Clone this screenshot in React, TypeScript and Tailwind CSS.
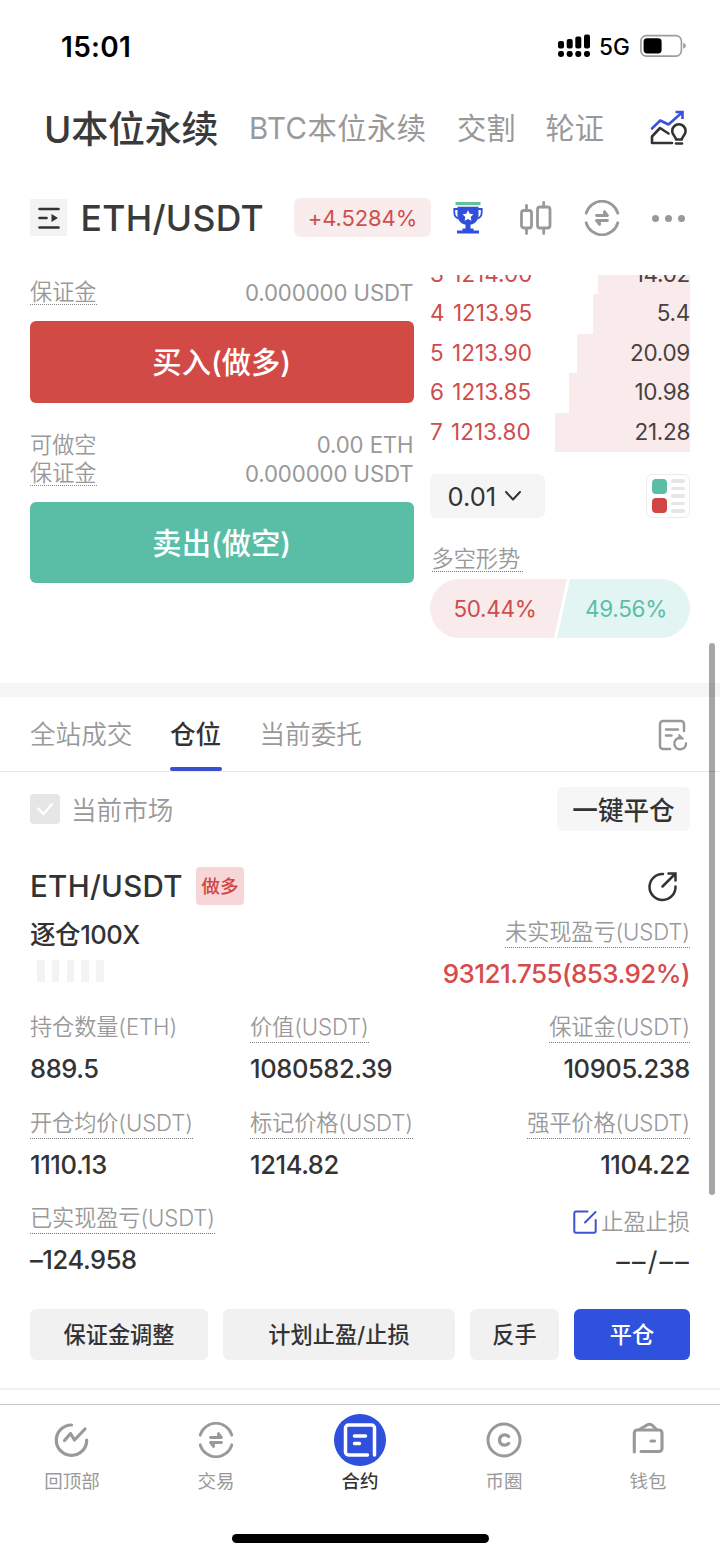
import React from 'react';

const StatusBar = () => (
  <div className="h-[92px] shrink-0 flex items-center justify-between pl-[61px] pr-[34px] text-black">
    <span className="pt-[1px] text-[28px] leading-none font-semibold tracking-[0.3px]">15:01</span>
    <div className="flex items-center">
      <svg width="33" height="24" viewBox="0 0 33 24" fill="currentColor">
        <rect x="0" y="7" width="6" height="7.5" rx="2" />
        <rect x="8.7" y="5" width="6" height="9.5" rx="2" />
        <rect x="17.3" y="2.5" width="6" height="12" rx="2" />
        <rect x="26" y="0.5" width="6" height="14" rx="2" />
        <rect x="0" y="17" width="6" height="6" rx="2.4" />
        <rect x="8.7" y="17" width="6" height="6" rx="2.4" />
        <rect x="17.3" y="17" width="6" height="6" rx="2.4" />
        <rect x="26" y="17" width="6" height="6" rx="2.4" />
      </svg>
      <span className="ml-[8px] w-[41px] pt-[2px] text-[22.5px] leading-none font-medium whitespace-nowrap">5G</span>
      <svg width="46" height="24" viewBox="0 0 46 24" fill="none">
        <rect x="0.9" y="1.6" width="40.5" height="20.5" rx="5.5" stroke="#9c9c9c" strokeWidth="1.6" />
        <rect x="3.6" y="4.3" width="18" height="15.2" rx="3.4" fill="#000" />
        <path d="M43.2 8.8c2 .8 2.6 1.8 2.6 3s-.6 2.2-2.6 3z" fill="#9c9c9c" />
      </svg>
    </div>
  </div>
);

const MarketTabs = () => (
  <div className="h-[72px] shrink-0 flex items-center pl-[44px] pr-[32px] text-[29.3px] leading-none text-[#999] whitespace-nowrap">
    <span className="w-[205px] pt-[2px] text-[37px] leading-none font-medium text-[#3a3a3a] tracking-[-0.2px]">U本位永续</span>
    <span className="w-[208px] pt-[2px] tracking-[0.5px]">BTC本位永续</span>
    <span className="w-[88.5px] pt-[2px]">交割</span>
    <span className="pt-[2px]">轮证</span>
    <svg className="ml-auto" width="38" height="36" viewBox="0 0 38 36" fill="none" strokeLinecap="round" strokeLinejoin="round">
      <path d="M2 18.5L10.2 10.5L18.5 14.5L32 2.5" stroke="#3b53d8" strokeWidth="2.6" />
      <path d="M25.5 2h7v7" stroke="#3b53d8" strokeWidth="2.6" strokeLinecap="butt" strokeLinejoin="miter" />
      <path d="M22 33H2V26.5L10 18L18.5 23.5" stroke="#333" strokeWidth="2.6" />
      <path d="M26 29.5c0-2.8-3.8-4-3.8-8.5a6.7 6.7 0 0 1 13.4 0c0 4.5-3.8 5.7-3.8 8.5z" stroke="#333" strokeWidth="2.6" />
      <path d="M26 33.5h6" stroke="#333" strokeWidth="2.6" />
    </svg>
  </div>
);

const SwapIcon = ({ size }: { size: number }) => (
  <svg width={size} height={size} viewBox="0 0 36 36" fill="none" stroke="currentColor" strokeWidth="2.8" strokeLinecap="round" strokeLinejoin="round">
    <path d="M2.2 13.2A16.4 16.4 0 0 1 33.8 13.2" />
    <path d="M2.2 22.8A16.4 16.4 0 0 0 33.8 22.8" />
    <path d="M12.5 15.5H23.5L20.5 11.5V15" />
    <path d="M23.5 20.5H12.5L15.5 24.5V21" />
  </svg>
);

const PairHeader = () => (
  <div className="h-[111px] shrink-0 flex items-start pt-[34px] pl-[30px]">
    <div className="mt-px w-[37px] h-[37px] bg-[#f3f3f3] flex items-center justify-center">
      <svg width="24" height="24" viewBox="0 0 24 24" fill="none" stroke="#333" strokeWidth="2.6" strokeLinecap="round">
        <path d="M2.5 3h19M2.5 12h7M2.5 21.5h19" />
        <path d="M14.5 8v8l6.5-4z" fill="#333" stroke="none" />
      </svg>
    </div>
    <span className="ml-[13.5px] w-[213.5px] text-[35.5px] leading-[41px] font-medium text-[#3a3a3a] tracking-[0.3px] whitespace-nowrap">ETH/USDT</span>
    <span className="w-[137px] h-[39px] rounded-md bg-[#f9ecec] text-center text-[22px] leading-[40px] tracking-[-0.1px] text-[#cf4f4f]">+4.5284%</span>
    <svg className="ml-[22px] mt-[4px]" width="30" height="32" viewBox="0 0 30 32">
      <rect x="2.5" y="0" width="25" height="3.2" fill="#62c39b" />
      <path d="M4.5 4.8h21V13c0 6-4.5 10-10.5 10S4.5 19 4.5 13z" fill="#2f50dc" />
      <path d="M5 7H1.3v3.5c0 3.5 2 5.5 4.7 6M25 7h3.7v3.5c0 3.5-2 5.5-4.7 6" fill="none" stroke="#2f50dc" strokeWidth="1.8" />
      <path d="M12.5 22h5v4.5h3V28.5H26V31.5H4V28.5H9.5V26.5H12.5z" fill="#2f50dc" />
      <path d="M15 8.2l1.7 3.5 3.8.5-2.8 2.7.7 3.8-3.4-1.8-3.4 1.8.7-3.8-2.8-2.7 3.8-.5z" fill="#fff" />
    </svg>
    <svg className="ml-[37px] mt-[3px]" width="32" height="34" viewBox="0 0 32 34" fill="none" stroke="#999" strokeWidth="2.8" strokeLinecap="round">
      <rect x="1.5" y="9.5" width="10" height="17.5" rx="2.5" />
      <path d="M6.5 4.5v5M6.5 27.5v5" />
      <rect x="17.5" y="6" width="12.5" height="21" rx="2.5" />
      <path d="M23.7 1.5v4.5M23.7 27.5v5" />
    </svg>
    <div className="ml-[32px] mt-[2px] text-[#999]">
      <SwapIcon size={36} />
    </div>
    <div className="ml-[32px] mt-[17px] flex gap-[6.5px]">
      <i className="w-[6.5px] h-[6.5px] rounded-full bg-[#999]" />
      <i className="w-[6.5px] h-[6.5px] rounded-full bg-[#999]" />
      <i className="w-[6.5px] h-[6.5px] rounded-full bg-[#999]" />
    </div>
  </div>
);

const TradeForm = () => (
  <div className="w-[383.5px] text-[22.2px] leading-[26px] text-[#999]">
    <div className="flex items-start justify-between pt-[4px]">
      <span className="h-[26px] leading-[26px] border-b border-dotted border-[#888] font-[350]">保证金</span>
      <span className="mt-[1px] tracking-[-0.1px]">0.000000 USDT</span>
    </div>
    <button className="mt-[15px] pt-[2px] w-full h-[82px] rounded-md bg-[#d24a45] text-white text-[29.3px] font-medium flex items-center justify-center">
      买入(做多)
    </button>
    <div className="flex items-center justify-between mt-[28px]">
      <span className="pt-[1px] font-[350]">可做空</span>
      <span className="tracking-[-0.1px]">0.00 ETH</span>
    </div>
    <div className="flex items-start justify-between mt-[1px]">
      <span className="h-[27px] leading-[27px] border-b border-dotted border-[#888] font-[350]">保证金</span>
      <span className="mt-[2px] tracking-[-0.1px]">0.000000 USDT</span>
    </div>
    <button className="mt-[15px] pt-[2px] w-full h-[81px] rounded-md bg-[#5abea7] text-white text-[29.3px] font-medium flex items-center justify-center">
      卖出(做空)
    </button>
  </div>
);

const asks = [
  { level: 3, price: '1214.00', amount: '14.02', depth: 92.5 },
  { level: 4, price: '1213.95', amount: '5.4', depth: 97 },
  { level: 5, price: '1213.90', amount: '20.09', depth: 113 },
  { level: 6, price: '1213.85', amount: '10.98', depth: 121 },
  { level: 7, price: '1213.80', amount: '21.28', depth: 135 },
];

const OrderBook = () => (
  <div className="w-[260px]">
    <div className="h-[177px] overflow-hidden flex flex-col justify-end">
      {asks.map((a) => (
        <div key={a.level} className="h-[39.4px] shrink-0 flex items-center justify-between text-[22.5px] leading-none">
          <span className="pb-[1px] text-[#cf4c4c] whitespace-pre [word-spacing:2px]">{a.level} {a.price}</span>
          <span
            className="h-full pb-[1px] bg-[#f9ebeb] text-[#4a4040] tracking-[-0.3px] flex items-center justify-end"
            style={{ width: a.depth }}
          >
            {a.amount}
          </span>
        </div>
      ))}
    </div>
    <div className="mt-[22px] flex items-center justify-between">
      <button className="w-[114.5px] h-[44px] rounded-md bg-[#f5f5f5] flex items-center pl-[17.5px] text-[25.5px] leading-none text-[#333]">
        <span className="w-[56.5px] pt-[1px] text-left">0.01</span>
        <svg width="18" height="12" viewBox="0 0 18 12" fill="none" stroke="#333" strokeWidth="2" strokeLinecap="round" strokeLinejoin="round">
          <path d="M2 2l7 7.5L16 2" />
        </svg>
      </button>
      <div className="w-[44px] h-[44px] rounded-md border border-[#ececec] flex items-center justify-center gap-[4px]">
        <div className="flex flex-col gap-[4px]">
          <i className="w-[15px] h-[15px] rounded-[4px] bg-[#5abea7]" />
          <i className="w-[15px] h-[15px] rounded-[4px] bg-[#d24545]" />
        </div>
        <div className="flex flex-col gap-[4px]">
          <i className="w-[14px] h-[3.5px] rounded-full bg-[#e6e6e6]" />
          <i className="w-[14px] h-[3.5px] rounded-full bg-[#e6e6e6]" />
          <i className="w-[14px] h-[3.5px] rounded-full bg-[#e6e6e6]" />
          <i className="w-[14px] h-[3.5px] rounded-full bg-[#e6e6e6]" />
          <i className="w-[14px] h-[3.5px] rounded-full bg-[#e6e6e6]" />
        </div>
      </div>
    </div>
    <div className="mt-[27px] ml-[1.5px] w-[91px] h-[27px] border-b border-dotted border-[#777] text-[22.2px] leading-[28px] font-[350] text-[#999]">多空形势</div>
    <div className="mt-[7px] h-[59px] rounded-full overflow-hidden flex text-[22.5px] leading-[60px] tracking-[-0.3px] text-center">
      <span className="w-[137px] pr-[7px] bg-[#f9ebeb] text-[#cf4c4c] [clip-path:polygon(0_0,100%_0,124px_100%,0_100%)]">50.44%</span>
      <span className="w-[133px] -ml-[10px] pl-[5px] bg-[#e2f5f3] text-[#5abea7] [clip-path:polygon(13px_0,100%_0,100%_100%,0_100%)]">49.56%</span>
    </div>
  </div>
);

const PositionTabs = () => (
  <div className="h-[75px] shrink-0 border-b border-[#e8e8e8] flex items-start pl-[30px] text-[25.6px] leading-[76px] font-[350] text-[#999] whitespace-nowrap">
    <span className="w-[140px]">全站成交</span>
    <span className="relative w-[52px] mr-[37.5px] h-[74px] font-medium text-[#333]">
      仓位
      <i className="absolute left-0 bottom-0 w-[52px] h-[4px] rounded-full bg-[#3b50cc]" />
    </span>
    <span>当前委托</span>
    <svg className="ml-auto mr-[32px] mt-[21.5px]" width="30" height="32" viewBox="0 0 30 32" fill="none" stroke="#999" strokeWidth="2.5" strokeLinecap="round" strokeLinejoin="round">
      <path d="M12 30H5a3 3 0 0 1-3-3V5a3 3 0 0 1 3-3H23a3 3 0 0 1 3 3V12" />
      <path d="M8 10.5h12M8 16.5h5.5" />
      <path d="M20.5 19A5.8 5.8 0 1 0 28 24.5" />
      <path d="M21 15.5v4.5h4.5z" fill="#999" strokeWidth="1" />
    </svg>
  </div>
);

const Field = ({ label, value, plain, end }: { label: string; value: string; plain?: boolean; end?: boolean }) => (
  <div className={`flex flex-col h-[95.5px] ${end ? 'items-end' : 'items-start'}`}>
    <span className={`h-[29px] text-[22.2px] leading-[26px] tracking-[-0.1px] font-[350] text-[#999] whitespace-nowrap ${plain ? '' : 'border-b border-dotted border-[#777]'}`}>
      {label}
    </span>
    <span className="mt-[12px] text-[25.5px] leading-[28px] font-medium tracking-[-0.4px] text-[#333]">{value}</span>
  </div>
);

const Position = () => (
  <div className="h-[618px] shrink-0 px-[30px] border-b-2 border-[#f0f0f0] flex flex-col">
    <div className="mt-[15px] flex items-center justify-between">
      <div className="flex items-center text-[25.6px] leading-none font-[350] text-[#999]">
        <span className="w-[30px] h-[30px] mr-[11px] rounded-[4px] bg-[#e6e6e6] flex items-center justify-center">
          <svg width="18" height="14" viewBox="0 0 18 14" fill="none" stroke="#fff" strokeWidth="2.5">
            <path d="M1.5 6l6 6L16.5 1.5" />
          </svg>
        </span>
        <span className="pt-[3px]">当前市场</span>
      </div>
      <button className="w-[133px] h-[44px] pt-[3px] rounded-md bg-[#f6f6f6] text-[25.6px] leading-none font-medium text-[#333]">一键平仓</button>
    </div>

    <div className="mt-[36px] h-[38px] flex items-center">
      <span className="w-[166px] pt-[2px] text-[29.5px] leading-none font-medium tracking-[0.3px] text-[#333] whitespace-nowrap">ETH/USDT</span>
      <span className="w-[48px] h-[38px] rounded-[4px] bg-[#f6d6d6] text-center text-[18.5px] leading-[39px] font-medium text-[#cf4545]">做多</span>
      <svg className="ml-auto mr-[12px]" width="31" height="31" viewBox="0 0 31 31" fill="none" stroke="#333" strokeWidth="2.5" strokeLinecap="round">
        <path d="M16 3A13 13 0 1 0 28.5 15.5" />
        <path d="M15.5 15.5L28 3M21.5 2.5h7v7" />
      </svg>
    </div>

    <div className="h-[109px] flex justify-between">
      <div>
        <div className="mt-[16px] text-[25.6px] leading-[28px] font-medium tracking-[-0.5px] text-[#333]">逐仓100X</div>
        <div className="mt-[11px] ml-[7px] flex gap-[7.3px]">
          <i className="w-[7.5px] h-[22px] bg-[#f3f3f3]" />
          <i className="w-[7.5px] h-[22px] bg-[#f3f3f3]" />
          <i className="w-[7.5px] h-[22px] bg-[#f3f3f3]" />
          <i className="w-[7.5px] h-[22px] bg-[#f3f3f3]" />
          <i className="w-[7.5px] h-[22px] bg-[#f3f3f3]" />
        </div>
      </div>
      <div className="flex flex-col items-end">
        <span className="mt-[14px] h-[29px] text-[22.2px] leading-[26px] tracking-[-0.1px] font-[350] text-[#999] border-b border-dotted border-[#777]">未实现盈亏(USDT)</span>
        <span className="mt-[11px] text-[26px] leading-[30px] font-medium tracking-[-0.58px] text-[#d64b4b]">93121.755(853.92%)</span>
      </div>
    </div>

    <div className="grid grid-cols-[220px_220px_220px]">
      <Field label="持仓数量(ETH)" value="889.5" plain />
      <Field label="价值(USDT)" value="1080582.39" />
      <Field label="保证金(USDT)" value="10905.238" end />
      <Field label="开仓均价(USDT)" value="1110.13" />
      <Field label="标记价格(USDT)" value="1214.82" />
      <Field label="强平价格(USDT)" value="1104.22" end />
      <Field label="已实现盈亏(USDT)" value="–124.958" />
      <div />
      <div className="flex flex-col items-end">
        <span className="mt-[4px] flex items-center text-[22.2px] leading-[26px] font-[350] text-[#999]">
          <svg className="mr-[4px]" width="24" height="24" viewBox="0 0 24 24" fill="none" stroke="#3b53d0" strokeWidth="2" strokeLinecap="round">
            <path d="M14.5 1.5H3a1.7 1.7 0 0 0-1.7 1.7V21A1.7 1.7 0 0 0 3 22.7H21A1.7 1.7 0 0 0 22.7 21V10" />
            <path d="M12 12.5L22.5 2" />
          </svg>
          止盈止损
        </span>
        <span className="-mr-[1px] mt-[13px] text-[27px] leading-[28px] tracking-[2.2px] text-[#333]">––/––</span>
      </div>
    </div>

    <div className="mt-[8px] flex gap-[15px] text-[22.2px] leading-none font-medium text-[#333]">
      <button className="w-[178px] h-[51px] pt-[2px] rounded-md bg-[#f1f1f1]">保证金调整</button>
      <button className="w-[232px] h-[51px] pt-[2px] rounded-md bg-[#f1f1f1]">计划止盈/止损</button>
      <button className="w-[89px] h-[51px] pt-[2px] rounded-md bg-[#f1f1f1]">反手</button>
      <button className="w-[116px] h-[51px] pt-[2px] rounded-md bg-[#2f52de] text-white">平仓</button>
    </div>
  </div>
);

const NavItem = ({ label, active, children }: { label: string; active?: boolean; children: React.ReactNode }) => (
  <div className={`flex-1 flex flex-col items-center ${active ? 'text-[#333] font-medium' : 'text-[#999]'}`}>
    <div className="mt-[9px] h-[52px] flex items-center justify-center">{children}</div>
    <span className="mt-[4px] text-[18.5px] leading-[23px]">{label}</span>
  </div>
);

const BottomNav = () => (
  <nav className="mt-[14px] h-[130px] shrink-0 border-t border-[#c8c8c8] flex">
    <NavItem label="回顶部">
      <svg width="36" height="36" viewBox="0 0 36 36" fill="none" stroke="currentColor" strokeWidth="3.2" strokeLinecap="round" strokeLinejoin="round">
        <path d="M17.5 3A15.2 15.2 0 1 0 32.7 18.2" />
        <path d="M10.5 18.5L16.5 11.5L20.5 18L31 7" />
      </svg>
    </NavItem>
    <NavItem label="交易">
      <SwapIcon size={36} />
    </NavItem>
    <NavItem label="合约" active>
      <svg width="52" height="52" viewBox="0 0 52 52" fill="none" stroke="#fff" strokeWidth="3.5" strokeLinecap="round" strokeLinejoin="round">
        <circle cx="26" cy="26" r="26" fill="#2f50dc" stroke="none" />
        <path d="M33.5 41H14.5a3 3 0 0 1-3-3V14a3 3 0 0 1 3-3H37.5a3 3 0 0 1 3 3V41" />
        <path d="M20.5 22h11M20.5 29.5h5" />
      </svg>
    </NavItem>
    <NavItem label="币圈">
      <svg width="36" height="36" viewBox="0 0 36 36" fill="none" stroke="currentColor" strokeWidth="3" strokeLinecap="round">
        <circle cx="18" cy="18" r="16" />
        <path d="M22.5 14.5A5.2 5.2 0 1 0 22.5 21.5" strokeWidth="3.3" />
      </svg>
    </NavItem>
    <NavItem label="钱包">
      <svg width="36" height="36" viewBox="0 0 36 36" fill="none" stroke="currentColor" strokeWidth="3.1" strokeLinecap="round" strokeLinejoin="round">
        <path d="M4.3 30V11A3 3 0 0 1 7.3 8H29A3 3 0 0 1 32 11V26.5A3 3 0 0 1 29 29.5H11" />
        <path d="M9.5 7.5L17 3Q19.5 1.5 22 3L26.5 7.5" />
        <path d="M21 19h3.5" />
      </svg>
    </NavItem>
  </nav>
);

export default function App() {
  return (
    <div className="relative w-[720px] h-[1558px] bg-white overflow-hidden flex flex-col font-['Inter','Noto_Sans_CJK_SC',sans-serif]">
      <StatusBar />
      <MarketTabs />
      <PairHeader />
      <div className="h-[408px] shrink-0 flex justify-between px-[30px]">
        <TradeForm />
        <OrderBook />
      </div>
      <div className="h-[14px] shrink-0 bg-[#f6f6f6]" />
      <PositionTabs />
      <Position />
      <BottomNav />
      <div className="mx-auto w-[257px] h-[9px] shrink-0 rounded-full bg-black" />

      {/* Scroll indicator */}
      <div className="absolute right-[5px] top-[643px] w-[6px] h-[552px] rounded-full bg-black/35" />
    </div>
  );
}
